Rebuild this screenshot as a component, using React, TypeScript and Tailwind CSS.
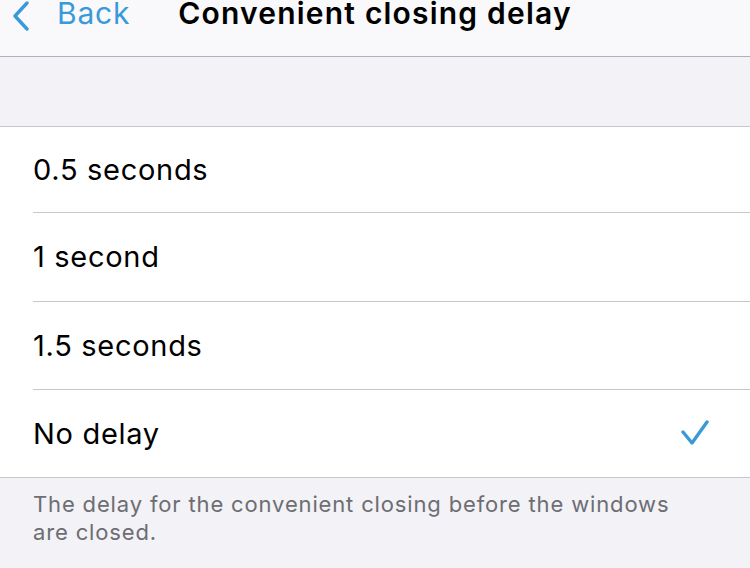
import { useState } from "react";

const options = [
  { label: "0.5 seconds", h: "h-[86px]" },
  { label: "1 second", h: "h-[89px]" },
  { label: "1.5 seconds", h: "h-[88px]" },
  { label: "No delay", h: "h-[87px]" },
];

export default function App() {
  const [selected, setSelected] = useState("No delay");

  return (
    <div
      className="w-[750px] h-[568px] bg-[#f2f2f7] overflow-hidden"
      style={{ fontFamily: "Inter, 'Liberation Sans', sans-serif" }}
    >
      {/* Nav bar */}
      <div className="relative h-[57px] flex justify-center items-start bg-[#f9f9fb] border-b border-[#b2b2b6]">
        <button className="absolute left-[12px] top-[1px] flex items-start gap-[27px] text-[#3a9ad9]">
          <svg width="18" height="30" viewBox="0 0 18 30">
            <polyline
              points="15,2 3,15 15,28"
              fill="none"
              stroke="currentColor"
              strokeWidth="3.4"
              strokeLinecap="round"
              strokeLinejoin="round"
            />
          </svg>
          <span className="text-[30px] leading-[30px] -mt-[3px] tracking-[0.8px]">Back</span>
        </button>
        <h1 className="text-[30px] leading-[30px] font-semibold text-black -mt-[2px] tracking-[1.2px]">
          Convenient closing delay
        </h1>
      </div>

      {/* Spacer band */}
      <div className="h-[70px] border-b border-[#c8c7cc]" />

      {/* Options list */}
      <div className="bg-white border-b border-[#c8c7cc]">
        {options.map((opt, i) => (
          <button
            key={opt.label}
            onClick={() => setSelected(opt.label)}
            className="w-full flex text-left pl-[33px]"
          >
            <div
              className={`flex-1 ${opt.h} flex items-center justify-between pr-[40px] ${
                i < options.length - 1 ? "border-b border-[#c8c7cc]" : ""
              }`}
            >
              <span className="text-[29px] text-black tracking-[0.7px]">{opt.label}</span>
              {selected === opt.label && (
                <svg width="30" height="28" viewBox="0 0 30 28">
                  <polyline
                    points="3,12 12,23 27,2"
                    fill="none"
                    stroke="#3a9ad9"
                    strokeWidth="3.4"
                    strokeLinecap="round"
                    strokeLinejoin="round"
                  />
                </svg>
              )}
            </div>
          </button>
        ))}
      </div>

      {/* Footer */}
      <p className="px-[33px] pt-[12px] text-[22px] leading-[28px] text-[#6d6d72] tracking-[0.85px]">
        The delay for the convenient closing before the windows
        <br />
        are closed.
      </p>
    </div>
  );
}
